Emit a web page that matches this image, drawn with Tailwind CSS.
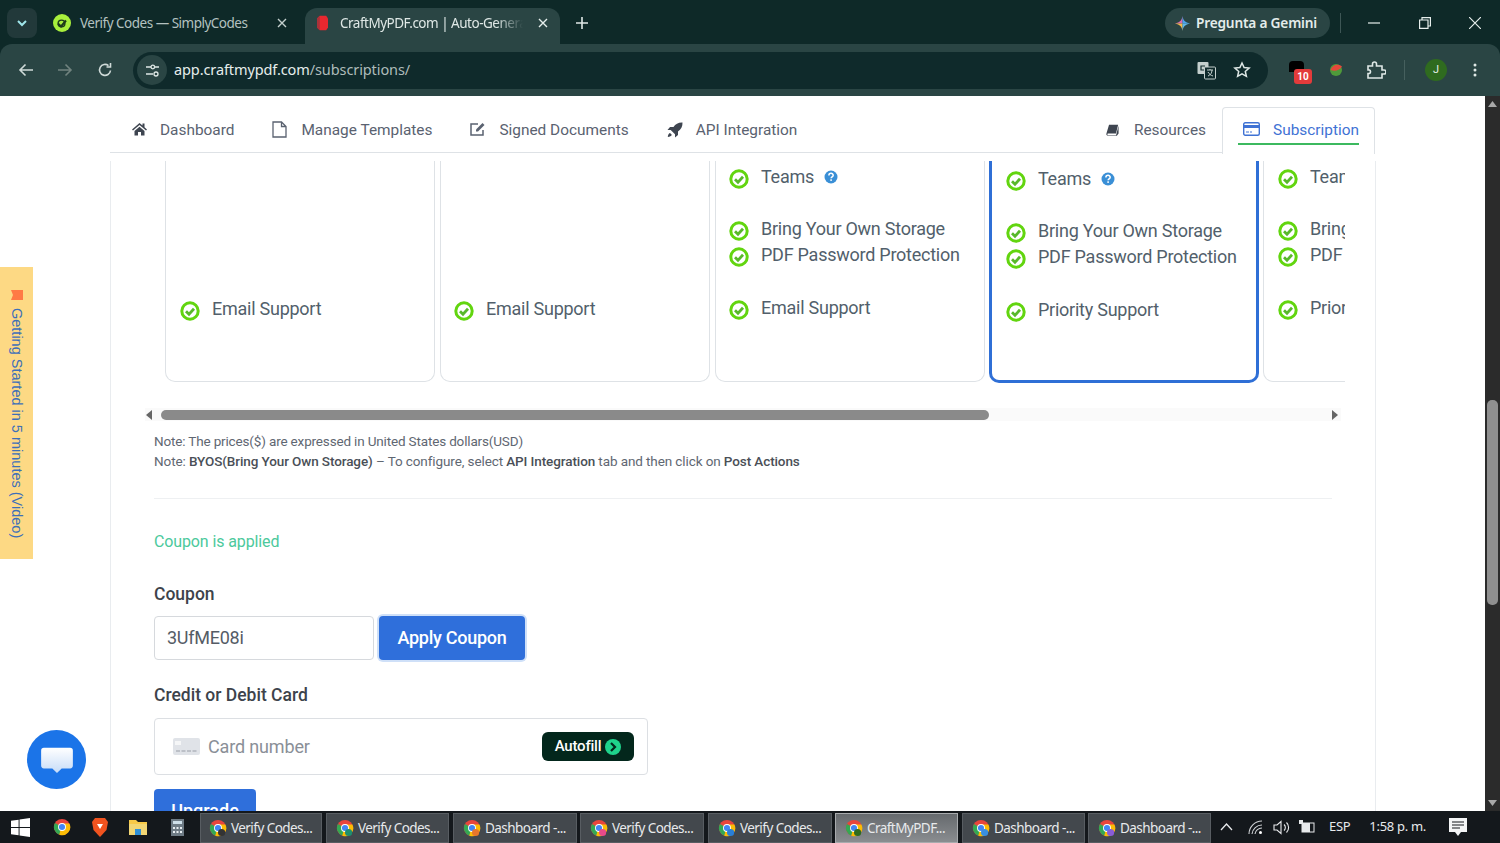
<!DOCTYPE html>
<html lang="en">
<head>
    <meta charset="UTF-8">
    <title>CraftMyPDF.com | Auto-Generate PDF</title>
    <script src="https://cdn.jsdelivr.net/npm/@tailwindcss/browser@4"></script>
</head>
<body class="w-[1500px] h-[843px] overflow-hidden flex flex-col font-[Roboto,sans-serif] bg-white">

    <!-- shared icons -->
    <svg class="hidden">
        <symbol id="check" viewBox="0 0 20 20">
            <circle cx="10" cy="10" r="8.200" fill="none" stroke="#62d50f" stroke-width="3"/>
            <path d="M6 10.200l3 3 5-5.400" fill="none" stroke="#58b82a" stroke-width="2.800"/>
        </symbol>
        <symbol id="help" viewBox="0 0 14 14">
            <circle cx="7" cy="7" r="6.500" fill="#3a8fd6"/>
            <path d="M4.900 5.400c0-2.700 4.300-2.700 4.300-.1 0 1.600-2.100 1.600-2.100 3" fill="none" stroke="#fff" stroke-width="1.500"/>
            <rect x="6.300" y="9.300" width="1.600" height="1.600" fill="#fff"/>
        </symbol>
        <symbol id="chrome" viewBox="0 0 20 20">
            <circle cx="10" cy="10" r="9" fill="#e8453c"/>
            <path d="M10 10L2.200 5.500A9 9 0 0 0 7 18.500z" fill="#34a853"/>
            <path d="M10 6h8.200A9 9 0 0 1 7 18.500z" fill="#fbbc05"/>
            <circle cx="10" cy="10" r="4.400" fill="#fff"/>
            <circle cx="10" cy="10" r="3.400" fill="#4285f4"/>
        </symbol>
    </svg>

    <!-- tab strip -->
    <div class="h-[44px] shrink-0 bg-[#0e2928] flex items-end relative">
        <div class="w-[30px] h-[30px] ml-[7px] mb-[6px] rounded-lg bg-[#22393a] flex items-center justify-center">
            <svg width="14" height="14" viewBox="0 0 14 14"><path d="M3 5l4 4 4-4" fill="none" stroke="#9fe6ea" stroke-width="2"/></svg>
        </div>
        <div class="w-[268px] h-[36px] flex items-center pl-[16px] pb-[6px] text-[#b4c2c0] text-[13.500px] font-['Noto_Sans'] tracking-[-0.5px]">
            <svg width="18" height="18" viewBox="0 0 18 18" class="mr-[9px] shrink-0"><circle cx="9" cy="9" r="9" fill="#a8ef3c"/><path d="M5 9.500l3 3 5-6" fill="none" stroke="#1d3a1a" stroke-width="2"/><circle cx="8.500" cy="9.500" r="3.400" fill="none" stroke="#1d3a1a" stroke-width="1.400"/></svg>
            <span class="w-[176px] whitespace-nowrap">Verify Codes — SimplyCodes</span>
            <svg width="10" height="10" viewBox="0 0 10 10" class="ml-[21px] shrink-0"><path d="M1 1l8 8M9 1l-8 8" stroke="#c4d0ce" stroke-width="1.400"/></svg>
        </div>
        <div class="w-[255px] h-[36px] rounded-t-xl bg-[#2a4544] flex items-center pl-[12px] pb-[6px] text-[#dfe8e6] text-[13.500px] font-['Noto_Sans'] tracking-[-0.5px]">
            <svg width="11" height="16" viewBox="0 0 12 16" class="mr-[12px] shrink-0"><path d="M3 0h7l2 3v10l-2 3H3L0 13V3z" fill="#e8282f"/><path d="M3 0L0 3v10l3 3z" fill="#a8323a"/></svg>
            <span class="w-[183px] overflow-hidden whitespace-nowrap [mask-image:linear-gradient(90deg,#000_85%,transparent)]">CraftMyPDF.com | Auto-Generate PDF</span>
            <svg width="10" height="10" viewBox="0 0 10 10" class="ml-[15px] shrink-0"><path d="M1 1l8 8M9 1l-8 8" stroke="#e6eeec" stroke-width="1.400"/></svg>
        </div>
        <svg width="12" height="12" viewBox="0 0 12 12" class="ml-[16px] mb-[15px]"><path d="M6 0v12M0 6h12" stroke="#dfe8e6" stroke-width="1.600"/></svg>
        <div class="ml-auto flex items-center mb-[6px]">
            <div class="w-[165px] h-[30px] rounded-[15px] bg-[#2a4544] flex items-center pl-[10px] text-[#e4ecea] text-[13.700px] font-semibold font-['Noto_Sans'] tracking-[-0.2px]">
                <svg width="15" height="15" viewBox="0 0 16 16" class="mr-[6px]">
                    <clipPath id="gem"><path d="M8 0c.6 4.600 2.800 7 8 8-5.200 1-7.400 3.400-8 8-.6-4.600-2.800-7-8-8 5.200-1 7.400-3.400 8-8z"/></clipPath>
                    <g clip-path="url(#gem)"><rect width="8" height="8" fill="#d86bb0"/><rect x="8" width="8" height="8" fill="#4aa3f0"/><rect y="8" width="8" height="8" fill="#f2b84b"/><rect x="8" y="8" width="8" height="8" fill="#5fb6e8"/></g>
                </svg>
                Pregunta a Gemini
            </div>
            <div class="w-px h-[20px] bg-[#3d5655] ml-[10px]"></div>
            <div class="w-[159px] flex items-center justify-between pl-[27px] pr-[19px]">
                <svg width="12" height="12" viewBox="0 0 12 12"><path d="M0 6h12" stroke="#e6eeec" stroke-width="1.200"/></svg>
                <svg width="12" height="12" viewBox="0 0 12 12"><path d="M.6 3h8.400v8.400H.6zM3 3V.6h8.400V9H9" fill="none" stroke="#e6eeec" stroke-width="1.200"/></svg>
                <svg width="12" height="12" viewBox="0 0 12 12"><path d="M0 0l12 12M12 0L0 12" stroke="#e6eeec" stroke-width="1.200"/></svg>
            </div>
        </div>
    </div>

    <!-- toolbar -->
    <div class="h-[52px] shrink-0 bg-[#0e2928]">
        <div class="h-full rounded-tl-xl rounded-tr-xl bg-[#2a4544] flex items-center">
            <svg width="16" height="16" viewBox="0 0 16 16" class="ml-[18px]"><path d="M15 8H2M7.500 2.500L2 8l5.500 5.500" fill="none" stroke="#cfdad8" stroke-width="1.600"/></svg>
            <svg width="16" height="16" viewBox="0 0 16 16" class="ml-[23px]"><path d="M1 8h13M8.500 2.500L14 8l-5.500 5.500" fill="none" stroke="#71837f" stroke-width="1.600"/></svg>
            <svg width="16" height="16" viewBox="0 0 16 16" class="ml-[24px]"><path d="M13.500 8.500A5.500 5.500 0 1 1 11.500 3.600M13.500 1v4h-4" fill="none" stroke="#cfdad8" stroke-width="1.600"/></svg>
            <div class="ml-[20px] w-[1135px] h-[37px] rounded-full bg-[#0f2a2b] flex items-center pl-[4px]">
                <div class="w-[30px] h-[30px] rounded-full bg-[#2a4544] flex items-center justify-center">
                    <svg width="15" height="15" viewBox="0 0 15 15"><path d="M1 4h5M1 11h7" stroke="#dfe8e6" stroke-width="1.500"/><path d="M10 4h4" stroke="#dfe8e6" stroke-width="1.500"/><circle cx="7.800" cy="4" r="1.800" fill="none" stroke="#dfe8e6" stroke-width="1.300"/><circle cx="11" cy="11" r="2" fill="none" stroke="#dfe8e6" stroke-width="1.300"/></svg>
                </div>
                <span class="ml-[7px] text-[14.500px] text-[#e6eeec] font-['Noto_Sans'] tracking-[-0.1px]">app.craftmypdf.com<span class="text-[#aebcba]">/subscriptions/</span></span>
                <svg width="19" height="19" viewBox="0 0 19 19" class="ml-auto"><rect x="0.500" y="1" width="11" height="12" rx="1" fill="#c4cfcd"/><rect x="7.500" y="6" width="11" height="12" rx="1" fill="#0f2a2b" stroke="#c4cfcd"/><path d="M10 9h6M13 8v1M11 15c2.500-1 4-3 4-6M11 11c1 2 3 3.500 5 4" fill="none" stroke="#c4cfcd"/><path d="M8 5H4v4h3" fill="none" stroke="#0f2a2b" stroke-width="1.200"/></svg>
                <svg width="18" height="18" viewBox="0 0 18 18" class="ml-[17px] mr-[17px]"><path d="M9 2l2.100 4.600 5 .5-3.800 3.300 1.100 4.900L9 12.800l-4.400 2.500 1.100-4.900L1.900 7.100l5-.5z" fill="none" stroke="#dfe8e6" stroke-width="1.500"/></svg>
            </div>
            <div class="relative ml-[21px] w-[15px] h-[11px] bg-black rounded-t-sm -mt-[8px]">
                <span class="absolute left-[5px] top-[8px] w-[18px] h-[15px] bg-[#e33b3b] rounded-[3px] text-white text-[10px] leading-[15px] font-bold text-center">10</span>
            </div>
            <svg width="14" height="14" viewBox="0 0 14 14" class="ml-[25px]"><circle cx="7" cy="7" r="6" fill="#4f9a3a"/><path d="M1.500 7C3 2 9 0 13 3.500 11 7 6 9 1.500 7z" fill="#e5483a"/></svg>
            <svg width="20" height="20" viewBox="0 0 20 20" class="ml-[23px]"><path d="M2 6h4.500V4a2 2 0 0 1 4 0v2H16v4h2a2 2 0 0 1 0 4h-2v4H2v-4.500h1.500a2 2 0 0 0 0-3.500H2z" fill="none" stroke="#dfe8e6" stroke-width="1.600"/></svg>
            <div class="w-px h-[20px] bg-[#46605e] ml-[18px]"></div>
            <div class="ml-[20px] w-[22px] h-[22px] rounded-full bg-[#2f6b1f] text-[#e6eeec] text-[11px] flex items-center justify-center">J</div>
            <svg width="4" height="14" viewBox="0 0 4 14" class="ml-[26px]"><circle cx="2" cy="2" r="1.500" fill="#dfe8e6"/><circle cx="2" cy="7" r="1.500" fill="#dfe8e6"/><circle cx="2" cy="12" r="1.500" fill="#dfe8e6"/></svg>
        </div>
    </div>

    <!-- page -->
    <div class="flex-1 min-h-0 flex relative">
        <div class="flex-1 min-w-0 overflow-hidden">
            <div class="ml-[110px] w-[1266px] h-full flex flex-col">

                <!-- nav -->
                <nav class="h-[57px] shrink-0 flex items-end text-[15.400px] text-[#525f7f]">
                    <div class="flex-1 h-[46px] border-b border-[#dee2e6] flex items-center pl-[22px] pt-[3px] text-[#5a6270]">
                        <svg width="15" height="14" viewBox="0 0 15 14" class="mr-[13px] -mt-[4px]"><path d="M7.500 1L0 7.500l1 1L7.500 3l6.500 5.500 1-1-2.500-2.200V1.500h-2v2z" fill="#3e4550"/><path d="M2.500 9L7.500 4.800 12.500 9v4.500H9V10H6v3.500H2.500z" fill="#3e4550"/></svg>
                        <span>Dashboard</span>
                        <svg width="15" height="17" viewBox="0 0 15 17" class="ml-[38px] mr-[14px] -mt-[4px]"><path d="M1 1h8.500L14 5.500V16H1z M9.500 1v4.500H14" fill="none" stroke="#5a6270" stroke-width="1.300"/></svg>
                        <span>Manage Templates</span>
                        <svg width="16" height="15" viewBox="0 0 16 15" class="ml-[38px] mr-[13px] -mt-[6px]"><path d="M13 9v5H1V3h7" fill="none" stroke="#5a6270" stroke-width="1.500"/><path d="M6 8.500L12.500 2 14.500 4 8 10.500H6z" fill="#5a6270"/></svg>
                        <span>Signed Documents</span>
                        <svg width="16" height="16" viewBox="0 0 16 16" class="ml-[38px] mr-[13px] -mt-[2px]"><path d="M15.500.5c-4-.2-7 1.500-9 4.500H3L.5 8h3.200l4.300 4.300V15.500l3-2.500V9.500c3-2 4.700-5 4.500-9zM3 11c-1.500.5-2 2-2.200 4 2-.2 3.500-.8 4-2.200z" fill="#3e4550"/></svg>
                        <span>API Integration</span>
                        <svg width="13" height="14" viewBox="0 0 15 14" class="ml-auto mr-[15px] -mt-[2px]"><path d="M3.500 1H14l-2.500 10H2A1.500 1.500 0 0 0 2 13h9.500l.5-1.500L14.500 2v9l-2 2.500H2.200C1 13.500 0 12.500.5 11z" fill="#3e4550"/></svg>
                        <span class="mr-[16px]">Resources</span>
                    </div>
                    <div class="w-[153px] mr-[1px] h-[47px] -mb-[1px] border border-b-0 border-[#dee2e6] rounded-t-[4px] bg-white relative z-10 flex items-start justify-center pt-[13px]">
                        <div class="w-[121px] h-[24px] border-b-2 border-[#3cb95f] flex items-start justify-between text-[#3f72d4]">
                            <svg width="17" height="14" viewBox="0 0 17 14" class="ml-[5px] mt-[1px]"><rect x="0.700" y="0.700" width="15.600" height="12.600" rx="1.500" fill="none" stroke="#3f72d4" stroke-width="1.400"/><rect x="1" y="3" width="15" height="3" fill="#3f72d4"/><path d="M3 10h3M7 10h2" stroke="#3f72d4"/></svg>
                            <span class="leading-[18px]">Subscription</span>
                        </div>
                    </div>
                </nav>

                <!-- main panel -->
                <div class="mt-[8px] flex-1 min-h-0 border-x border-[#e9ecef] pl-[43px] overflow-hidden">
                    <div class="w-[1191px] h-[222px] flex items-start pl-[11px] gap-[5px] overflow-hidden text-[18px] leading-[26px] text-[#525f6b] tracking-[-0.25px]">

                        <div class="w-[270px] h-[221px] shrink-0 border border-t-0 border-[#dee2e6] rounded-b-[10px] pl-[14px] pt-[135px]">
                            <div class="flex items-start gap-[12px]"><svg class="w-[20px] h-[20px] mt-[5px]"><use href="#check"/></svg>Email Support</div>
                        </div>
                        <div class="w-[270px] h-[221px] shrink-0 border border-t-0 border-[#dee2e6] rounded-b-[10px] pl-[13px] pt-[135px]">
                            <div class="flex items-start gap-[12px]"><svg class="w-[20px] h-[20px] mt-[5px]"><use href="#check"/></svg>Email Support</div>
                        </div>
                        <div class="w-[270px] h-[221px] shrink-0 border border-t-0 border-[#dee2e6] rounded-b-[10px] pl-[13px] pt-[3px]">
                            <div class="flex items-start gap-[12px] mb-[26px]"><svg class="w-[20px] h-[20px] mt-[5px]"><use href="#check"/></svg>Teams<svg class="w-[14px] h-[14px] mt-[6px] -ml-[2px]"><use href="#help"/></svg></div>
                            <div class="flex items-start gap-[12px]"><svg class="w-[20px] h-[20px] mt-[5px]"><use href="#check"/></svg>Bring Your Own Storage</div>
                            <div class="flex items-start gap-[12px] mb-[27px]"><svg class="w-[20px] h-[20px] mt-[5px]"><use href="#check"/></svg>PDF Password Protection</div>
                            <div class="flex items-start gap-[12px]"><svg class="w-[20px] h-[20px] mt-[5px]"><use href="#check"/></svg>Email Support</div>
                        </div>
                        <div class="w-[270px] h-[222px] -ml-[1px] shrink-0 border-[3px] border-t-0 border-[#2f6fd6] rounded-b-[10px] pl-[14px] pt-[5px]">
                            <div class="flex items-start gap-[12px] mb-[26px]"><svg class="w-[20px] h-[20px] mt-[5px]"><use href="#check"/></svg>Teams<svg class="w-[14px] h-[14px] mt-[6px] -ml-[2px]"><use href="#help"/></svg></div>
                            <div class="flex items-start gap-[12px]"><svg class="w-[20px] h-[20px] mt-[5px]"><use href="#check"/></svg>Bring Your Own Storage</div>
                            <div class="flex items-start gap-[12px] mb-[27px]"><svg class="w-[20px] h-[20px] mt-[5px]"><use href="#check"/></svg>PDF Password Protection</div>
                            <div class="flex items-start gap-[12px]"><svg class="w-[20px] h-[20px] mt-[5px]"><use href="#check"/></svg>Priority Support</div>
                        </div>
                        <div class="w-[270px] h-[221px] -ml-[1px] shrink-0 border border-t-0 border-[#dee2e6] rounded-b-[10px] pl-[14px] pt-[3px] whitespace-nowrap">
                            <div class="flex items-start gap-[12px] mb-[26px]"><svg class="w-[20px] h-[20px] mt-[5px]"><use href="#check"/></svg>Teams</div>
                            <div class="flex items-start gap-[12px]"><svg class="w-[20px] h-[20px] mt-[5px]"><use href="#check"/></svg>Bring Your Own Storage</div>
                            <div class="flex items-start gap-[12px] mb-[27px]"><svg class="w-[20px] h-[20px] mt-[5px]"><use href="#check"/></svg>PDF Password Protection</div>
                            <div class="flex items-start gap-[12px]"><svg class="w-[20px] h-[20px] mt-[5px]"><use href="#check"/></svg>Priority Support</div>
                        </div>
                    </div>

                    <!-- horizontal scrollbar -->
                    <div class="mt-[25px] w-[1196px] h-[13px] flex items-center bg-[#fafafa] -ml-[9px] pr-[3px]">
                        <svg width="7" height="10" viewBox="0 0 7 10" class="ml-[1px]"><path d="M6 0v10L0 5z" fill="#666"/></svg>
                        <div class="ml-[8px] w-[828px] h-[10px] rounded-full bg-[#8a8a8a]"></div>
                        <svg width="7" height="10" viewBox="0 0 7 10" class="ml-auto"><path d="M1 0v10l6-5z" fill="#666"/></svg>
                    </div>

                    <div class="mt-[10px] text-[13.500px] leading-[20px] text-[#5f6772] tracking-[-0.16px] w-[1191px]">
                        <p>Note: The prices($) are expressed in United States dollars(USD)</p>
                        <p class="tracking-[-0.1px]">Note: <b class="font-medium text-[#4a4f57]">BYOS(Bring Your Own Storage)</b> – To configure, select <b class="font-medium text-[#4a4f57]">API Integration</b> tab and then click on <b class="font-medium text-[#4a4f57]">Post Actions</b></p>
                    </div>
                    <div class="mt-[27px] w-[1178px] border-t border-[#eef0f2]"></div>
                    <p class="mt-[31px] text-[16px] leading-[24px] text-[#4cc99c] tracking-[-0.12px]">Coupon is applied</p>
                    <p class="mt-[28px] text-[17.500px] leading-[24px] font-medium text-[#3d434b]">Coupon</p>
                    <div class="mt-[10px] flex gap-[5px]">
                        <div class="w-[220px] h-[44px] border border-[#d6d9dd] rounded-[4px] pl-[12px] text-[18px] leading-[42px] text-[#555c66] tracking-[-0.25px]">3UfME08i</div>
                        <div class="w-[146px] h-[44px] rounded-[4px] bg-[#2f6fdb] ring-2 ring-[#cfe0f8] text-white text-[18px] leading-[44px] text-center font-medium tracking-[-0.25px]">Apply Coupon</div>
                    </div>
                    <p class="mt-[23px] text-[17.500px] leading-[24px] font-medium text-[#3d434b]">Credit or Debit Card</p>
                    <div class="mt-[11px] w-[494px] h-[57px] border border-[#dcdfe3] rounded-[4px] flex items-center pl-[18px] pr-[13px]">
                        <svg width="27" height="17" viewBox="0 0 27 17" class="shrink-0"><rect width="27" height="17" rx="2" fill="#e0e3e8"/><rect x="2" y="3" width="6" height="4" fill="#f5f6f7"/><path d="M3 13h21" stroke="#b0b5bc" stroke-width="1.500" stroke-dasharray="4 1.500"/></svg>
                        <span class="ml-[8px] text-[18px] text-[#8a8f97] tracking-[-0.15px]">Card number</span>
                        <div class="ml-auto w-[92px] h-[29px] rounded-[6px] bg-[#03271c] text-white text-[15px] font-medium flex items-center justify-center gap-[4px] tracking-[-0.2px]">
                            Autofill
                            <svg width="16" height="16" viewBox="0 0 16 16"><circle cx="8" cy="8" r="8" fill="#1fd38c"/><path d="M6 4l4 4-4 4" fill="none" stroke="#03271c" stroke-width="2.200"/></svg>
                        </div>
                    </div>
                    <div class="mt-[14px] w-[102px] h-[44px] rounded-[4px] bg-[#2f6fdb] text-white text-[18px] leading-[44px] text-center font-medium">Upgrade</div>
                </div>
            </div>
        </div>

        <!-- page scrollbar -->
        <div class="w-[15px] shrink-0 bg-[#2b2b2b] flex flex-col items-center">
            <svg width="9" height="6" viewBox="0 0 9 6" class="mt-[5px]"><path d="M0 6h9L4.500 0z" fill="#a8a8a8"/></svg>
            <div class="mt-[293px] w-[11px] h-[205px] rounded-[5px] bg-[#8f8f8f]"></div>
            <svg width="9" height="6" viewBox="0 0 9 6" class="mt-auto mb-[5px]"><path d="M0 0h9L4.500 6z" fill="#a8a8a8"/></svg>
        </div>

        <!-- getting started tab -->
        <div class="absolute left-0 top-[171px] w-[33px] h-[292px] bg-[#fdd984] flex flex-col items-center pt-[23px]">
            <svg width="12" height="10" viewBox="0 0 12 10" class="shrink-0"><path d="M0 0l2 5-2 5h12V0z" fill="#ff7a45"/></svg>
            <span class="[writing-mode:vertical-rl] mt-[8px] text-[14.500px] font-['Liberation_Sans'] text-[#3d6fb8] whitespace-nowrap">Getting Started in 5 minutes (Video)</span>
        </div>

        <!-- chat bubble -->
        <div class="absolute left-[27px] top-[634px] w-[59px] h-[59px] rounded-full bg-[#1b74e8] flex items-center justify-center">
            <svg width="32" height="28" viewBox="0 0 34 30"><defs><linearGradient id="bub" x1="0" y1="0" x2="0" y2="1"><stop offset="0" stop-color="#ffffff"/><stop offset="1" stop-color="#c6dcf8"/></linearGradient></defs><path d="M3 2h28a3 3 0 0 1 3 3v16a3 3 0 0 1-3 3h-9l-5 5-5-5H3a3 3 0 0 1-3-3V5a3 3 0 0 1 3-3z" fill="url(#bub)"/></svg>
        </div>
    </div>

    <!-- taskbar -->
    <div class="h-[32px] shrink-0 bg-[#14181c] flex items-end text-[13.500px] text-[#e8eaec] font-['Noto_Sans'] tracking-[-0.55px]">
        <svg width="19" height="19" viewBox="0 0 20 20" class="ml-[11px] mb-[6px]"><path d="M0 3l8-1.200v7.700H0zM9 1.700L20 0v9.500H9zM0 10.500h8v7.700L0 17zM9 10.500h11V20L9 18.300z" fill="#fff"/></svg>
        <svg width="18" height="18" viewBox="0 0 20 20" class="ml-[23px] mb-[7px]"><use href="#chrome"/></svg>
        <svg width="16" height="19" viewBox="0 0 16 19" class="ml-[21px] mb-[6px]"><path d="M3 0h10l3 4-1.500 8L8 19 1.500 12 0 4z" fill="#f0531f"/><path d="M5 6h6L8 11z" fill="#fff"/></svg>
        <svg width="18" height="16" viewBox="0 0 18 16" class="ml-[21px] mb-[8px]"><path d="M0 1h7l2 2h9v3H0z" fill="#f7c948"/><path d="M0 5h18v11H0z" fill="#f2d674"/><rect x="6" y="10" width="6" height="6" fill="#2f8fd6"/></svg>
        <svg width="13" height="17" viewBox="0 0 13 17" class="ml-[24px] mb-[7px]"><rect width="13" height="17" fill="#6e7b85"/><rect x="2" y="2" width="9" height="3" fill="#cfe0ea"/><path d="M2 8h2v2H2zM5.500 8h2v2h-2zM9 8h2v2H9zM2 12h2v2H2zM5.500 12h2v2h-2zM9 12h2v2H9z" fill="#e8eef2"/></svg>

        <div class="ml-[16px] w-[122px] h-[30px] bg-[#43484d] border border-[#585d62] flex items-center pl-[8px] gap-[4px]"><svg width="18" height="18" viewBox="0 0 20 20" class="shrink-0"><use href="#chrome" width="20" height="20"/><circle cx="14" cy="15" r="4" fill="#333"/></svg>Verify Codes...</div>
        <div class="ml-[4px] w-[123px] h-[30px] bg-[#43484d] border border-[#585d62] flex items-center pl-[9px] gap-[4px]"><svg width="18" height="18" viewBox="0 0 20 20" class="shrink-0"><use href="#chrome" width="20" height="20"/><circle cx="14" cy="15" r="4" fill="#1e8e6e"/></svg>Verify Codes...</div>
        <div class="ml-[4px] w-[124px] h-[30px] bg-[#43484d] border border-[#585d62] flex items-center pl-[9px] gap-[4px]"><svg width="18" height="18" viewBox="0 0 20 20" class="shrink-0"><use href="#chrome" width="20" height="20"/><circle cx="14" cy="15" r="4" fill="#e8762c"/></svg>Dashboard -...</div>
        <div class="ml-[3px] w-[124px] h-[30px] bg-[#43484d] border border-[#585d62] flex items-center pl-[9px] gap-[4px]"><svg width="18" height="18" viewBox="0 0 20 20" class="shrink-0"><use href="#chrome" width="20" height="20"/><circle cx="14" cy="15" r="4" fill="#e84a8a"/></svg>Verify Codes...</div>
        <div class="ml-[4px] w-[124px] h-[30px] bg-[#43484d] border border-[#585d62] flex items-center pl-[9px] gap-[4px]"><svg width="18" height="18" viewBox="0 0 20 20" class="shrink-0"><use href="#chrome" width="20" height="20"/><circle cx="14" cy="15" r="4" fill="#2a7fd6"/></svg>Verify Codes...</div>
        <div class="ml-[3px] w-[123px] h-[30px] bg-gradient-to-b from-[#666a6e] to-[#8a8d90] border border-[#a8abae] flex items-center pl-[9px] gap-[4px]"><svg width="18" height="18" viewBox="0 0 20 20" class="shrink-0"><use href="#chrome" width="20" height="20"/><circle cx="14" cy="15" r="4" fill="#2f6b1f"/></svg>CraftMyPDF...</div>
        <div class="ml-[4px] w-[123px] h-[30px] bg-[#43484d] border border-[#585d62] flex items-center pl-[9px] gap-[4px]"><svg width="18" height="18" viewBox="0 0 20 20" class="shrink-0"><use href="#chrome" width="20" height="20"/><circle cx="14" cy="15" r="4" fill="#3a8fe0"/></svg>Dashboard -...</div>
        <div class="ml-[3px] w-[123px] h-[30px] bg-[#43484d] border border-[#585d62] flex items-center pl-[9px] gap-[4px]"><svg width="18" height="18" viewBox="0 0 20 20" class="shrink-0"><use href="#chrome" width="20" height="20"/><circle cx="14" cy="15" r="4" fill="#8a5cd6"/></svg>Dashboard -...</div>

        <div class="flex-1 h-full flex items-center text-[13px] tracking-[-0.3px]">
            <svg width="13" height="8" viewBox="0 0 13 8" class="ml-[9px]"><path d="M1 7l5.500-6L12 7" fill="none" stroke="#e8eaec" stroke-width="1.300"/></svg>
            <svg width="15" height="15" viewBox="0 0 15 15" class="ml-[15px]"><path d="M1 14A13 13 0 0 1 14 1M4 14A10 10 0 0 1 14 5M7 14a7 7 0 0 1 7-6" fill="none" stroke="#d0d3d6" stroke-width="1.100"/><circle cx="12.500" cy="12.500" r="1.500" fill="#fff"/></svg>
            <svg width="17" height="15" viewBox="0 0 17 15" class="ml-[10px]"><path d="M1 5h3l4-3.500v12L4 10H1z" fill="none" stroke="#e8eaec" stroke-width="1.100"/><path d="M11 4.500a4 4 0 0 1 0 6M13.500 2.500a7 7 0 0 1 0 10" fill="none" stroke="#e8eaec" stroke-width="1.100"/></svg>
            <svg width="17" height="14" viewBox="0 0 17 14" class="ml-[8px]"><rect x="4" y="3" width="12" height="9" fill="none" stroke="#e8eaec"/><rect x="4" y="3" width="8" height="9" fill="#e8eaec"/><path d="M1 0v4h4V0" fill="#e8eaec"/></svg>
            <span class="ml-[14px]">ESP</span>
            <span class="ml-[19px] whitespace-nowrap">1:58 p. m.</span>
            <svg width="18" height="18" viewBox="0 0 18 18" class="ml-[23px]"><path d="M0 0h18v14h-6l-3 4-3-4H0z" fill="#f4f5f6"/><path d="M3 4h12M3 7h12M3 10h8" stroke="#14181c" stroke-width="1.200"/></svg>
        </div>
    </div>
</body>
</html>
